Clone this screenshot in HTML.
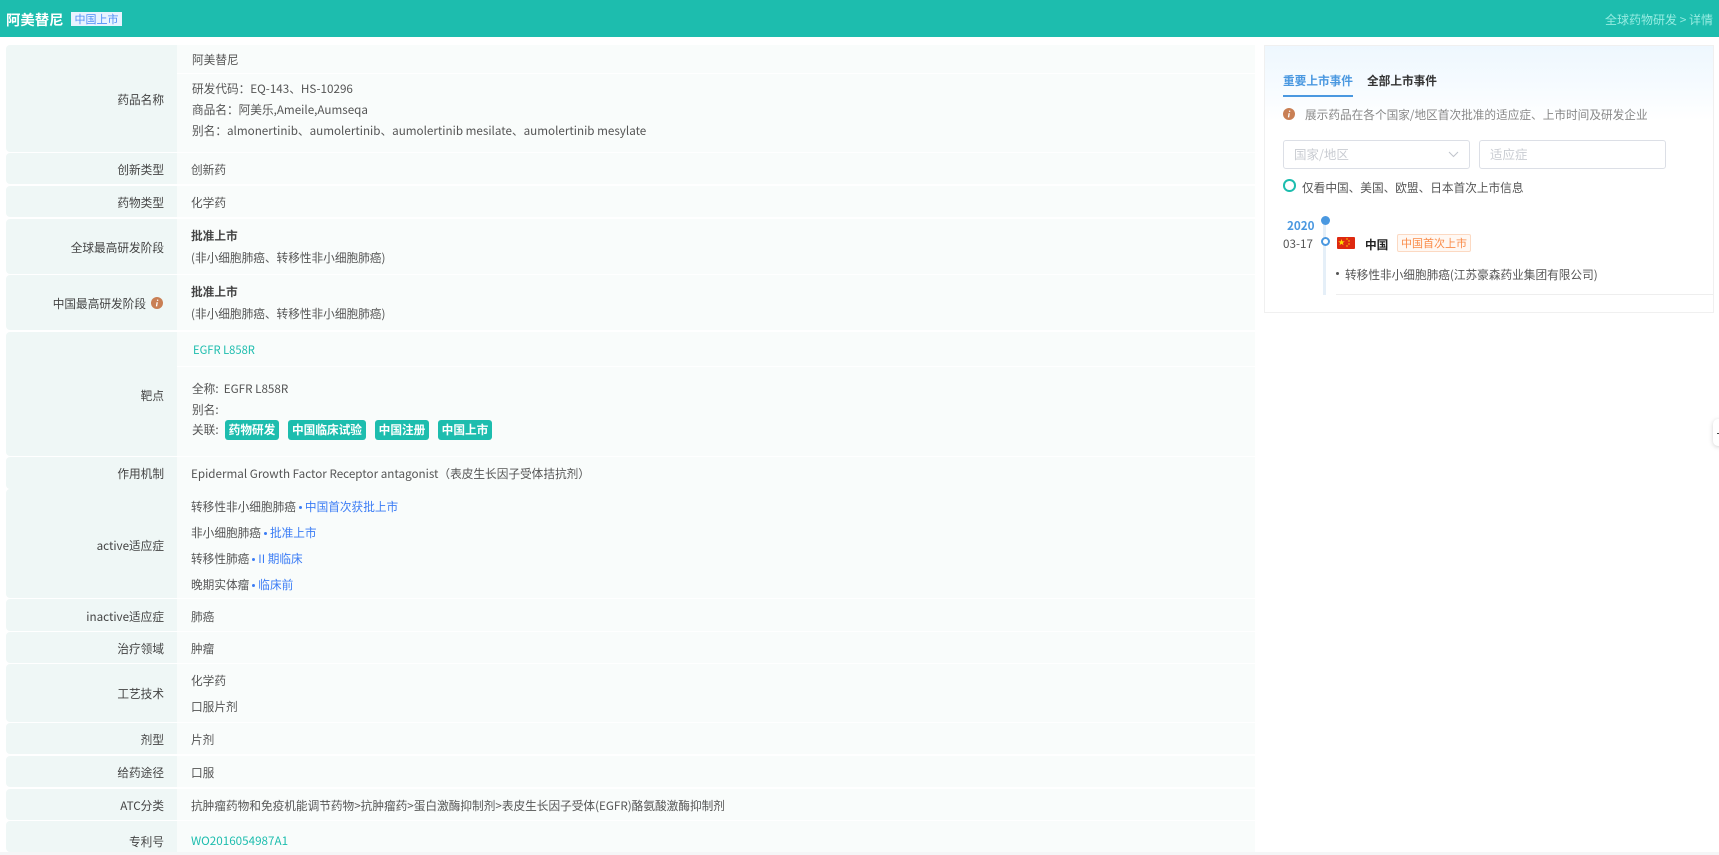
<!DOCTYPE html>
<html lang="zh">
<head>
<meta charset="utf-8">
<title>阿美替尼</title>
<style>
html,body{margin:0;padding:0;background:#fff;width:1719px;height:855px;overflow:hidden}
body{position:relative;font-family:"Noto Sans CJK SC","Liberation Sans",sans-serif;font-size:11.67px;color:#555}
div,span.a{position:absolute}
.t{white-space:nowrap;line-height:20px;height:20px}
.l{position:absolute;left:6px;width:171px;background:#eff7f6;border-radius:4px 0 0 4px}
.r{position:absolute;left:177px;width:1078px;background:#f9fcfb}
.lb{position:absolute;right:1555px;white-space:nowrap;line-height:20px;height:20px;color:#444}
.tag{position:absolute;top:420px;height:20px;line-height:20px;background:#1dbdae;color:#fff;font-weight:700;text-align:center;border-radius:3px;white-space:nowrap}
.b{color:#3b7cf5}
.g{color:#1dbdae}
i.d{display:inline-block;width:3px;height:3px;border-radius:50%;background:#3b7cf5;margin:0 3px 0 3px;vertical-align:2px}
</style>
</head>
<body>
<div style="left:0;top:0;width:1719px;height:37px;background:#1dbdae"></div>
<div class="t" style="left:6px;top:10px;font-size:14.4px;font-weight:700;color:#fff">阿美替尼</div>
<div class="t" style="left:71px;top:12px;width:51px;height:14px;line-height:14px;background:#e8f3ff;color:#4f8ff7;font-size:11px;text-align:center">中国上市</div>
<div class="t" style="left:1605px;top:10px;color:#97ece2;font-size:12px">全球药物研发 &gt; 详情</div>

<div class="l" style="top:45px;height:107px"></div><div class="r" style="top:45px;height:28px"></div><div class="r" style="top:74px;height:78px"></div>
<div class="l" style="top:153px;height:31px"></div><div class="r" style="top:153px;height:31px"></div>
<div class="l" style="top:186px;height:31px"></div><div class="r" style="top:186px;height:31px"></div>
<div class="l" style="top:219px;height:55px"></div><div class="r" style="top:219px;height:55px"></div>
<div class="l" style="top:275px;height:55px"></div><div class="r" style="top:275px;height:55px"></div>
<div class="l" style="top:332px;height:124px"></div><div class="r" style="top:332px;height:34px"></div><div class="r" style="top:367px;height:89px"></div>
<div class="l" style="top:457px;height:32px"></div><div class="r" style="top:457px;height:32px"></div>
<div class="l" style="top:489px;height:109px"></div><div class="r" style="top:489px;height:109px"></div>
<div class="l" style="top:599px;height:32px"></div><div class="r" style="top:599px;height:32px"></div>
<div class="l" style="top:632px;height:31px"></div><div class="r" style="top:632px;height:31px"></div>
<div class="l" style="top:664px;height:58px"></div><div class="r" style="top:664px;height:58px"></div>
<div class="l" style="top:723px;height:31px"></div><div class="r" style="top:723px;height:31px"></div>
<div class="l" style="top:756px;height:31px"></div><div class="r" style="top:756px;height:31px"></div>
<div class="l" style="top:789px;height:31px"></div><div class="r" style="top:789px;height:31px"></div>
<div class="l" style="top:821px;height:31px"></div><div class="r" style="top:821px;height:31px"></div>
<div style="left:0;top:852px;width:1719px;height:3px;background:#f5f6f7"></div>

<div class="lb" style="top:90px">药品名称</div>
<div class="lb" style="top:160px">创新类型</div>
<div class="lb" style="top:193px">药物类型</div>
<div class="lb" style="top:238px">全球最高研发阶段</div>
<div class="lb" style="top:294px;right:1573px">中国最高研发阶段</div>
<svg style="position:absolute;left:151px;top:297px" width="12" height="12" viewBox="0 0 12 12"><circle cx="6" cy="6" r="6" fill="#c97f54"/><path d="M6.6 2.6v1.3M6.2 5.2L5.5 9.4" stroke="#fff" stroke-width="1.3" fill="none"/></svg>
<div class="lb" style="top:386px">靶点</div>
<div class="lb" style="top:464px">作用机制</div>
<div class="lb" style="top:536px">active适应症</div>
<div class="lb" style="top:607px">inactive适应症</div>
<div class="lb" style="top:639px">治疗领域</div>
<div class="lb" style="top:684px">工艺技术</div>
<div class="lb" style="top:730px">剂型</div>
<div class="lb" style="top:763px">给药途径</div>
<div class="lb" style="top:796px">ATC分类</div>
<div class="lb" style="top:832px">专利号</div>

<div class="t" style="left:192px;top:50px">阿美替尼</div>
<div class="t" style="left:192px;top:79px">研发代码：EQ-143、HS-10296</div>
<div class="t" style="left:192px;top:100px">商品名：阿美乐,Ameile,Aumseqa</div>
<div class="t" style="left:192px;top:121px">别名：almonertinib、aumolertinib、aumolertinib mesilate、aumolertinib mesylate</div>
<div class="t" style="left:191px;top:160px">创新药</div>
<div class="t" style="left:191px;top:193px">化学药</div>
<div class="t" style="left:191px;top:226px;font-weight:700;color:#444">批准上市</div>
<div class="t" style="left:191px;top:248px">(非小细胞肺癌、转移性非小细胞肺癌)</div>
<div class="t" style="left:191px;top:282px;font-weight:700;color:#444">批准上市</div>
<div class="t" style="left:191px;top:304px">(非小细胞肺癌、转移性非小细胞肺癌)</div>

<div class="t g" style="left:193px;top:340px;font-size:11.2px">EGFR L858R</div>
<div class="t" style="left:192px;top:379px">全称:&nbsp; EGFR L858R</div>
<div class="t" style="left:192px;top:400px">别名:</div>
<div class="t" style="left:192px;top:420px">关联:</div>
<div class="tag" style="left:225px;width:54px">药物研发</div>
<div class="tag" style="left:288px;width:78px">中国临床试验</div>
<div class="tag" style="left:375px;width:54px">中国注册</div>
<div class="tag" style="left:438px;width:54px">中国上市</div>

<div class="t" style="left:191px;top:464px">Epidermal Growth Factor Receptor antagonist（表皮生长因子受体拮抗剂）</div>
<div class="t" style="left:191px;top:497px">转移性非小细胞肺癌<i class="d"></i><span class="b">中国首次获批上市</span></div>
<div class="t" style="left:191px;top:523px">非小细胞肺癌<i class="d"></i><span class="b">批准上市</span></div>
<div class="t" style="left:191px;top:549px">转移性肺癌<i class="d"></i><span class="b">II 期临床</span></div>
<div class="t" style="left:191px;top:575px">晚期实体瘤<i class="d"></i><span class="b">临床前</span></div>
<div class="t" style="left:191px;top:607px">肺癌</div>
<div class="t" style="left:191px;top:639px">肿瘤</div>
<div class="t" style="left:191px;top:671px">化学药</div>
<div class="t" style="left:191px;top:697px">口服片剂</div>
<div class="t" style="left:191px;top:730px">片剂</div>
<div class="t" style="left:191px;top:763px">口服</div>
<div class="t" style="left:191px;top:796px">抗肿瘤药物和免疫机能调节药物&gt;抗肿瘤药&gt;蛋白激酶抑制剂&gt;表皮生长因子受体(EGFR)酪氨酸激酶抑制剂</div>
<div class="t g" style="left:191px;top:831px">WO2016054987A1</div>

<div style="left:1264px;top:45px;width:448px;height:266px;border:1px solid #f0f0f0;background:linear-gradient(#eef7fe 0,#f6fbff 40px,#fff 75px)"></div>
<div class="t" style="left:1283px;top:71px;color:#4a98e0;font-weight:700">重要上市事件</div>
<div style="left:1283px;top:95px;width:70px;height:2px;background:#4a98e0"></div>
<div class="t" style="left:1367px;top:71px;color:#333;font-weight:700">全部上市事件</div>
<svg style="position:absolute;left:1283px;top:108px" width="12" height="12" viewBox="0 0 12 12"><circle cx="6" cy="6" r="6" fill="#c97f54"/><path d="M6.6 2.6v1.3M6.2 5.2L5.5 9.4" stroke="#fff" stroke-width="1.3" fill="none"/></svg>
<div class="t" style="left:1305px;top:105px;color:#888">展示药品在各个国家/地区首次批准的适应症、上市时间及研发企业</div>
<div style="left:1283px;top:140px;width:185px;height:27px;border:1px solid #dcdfe6;border-radius:3px;background:#fff"></div>
<div class="t" style="left:1294px;top:144px;color:#c9ccd2;font-size:12.5px">国家/地区</div>
<svg style="position:absolute;left:1448px;top:151px" width="11" height="7" viewBox="0 0 11 7"><path d="M1 1l4.5 4.5L10 1" fill="none" stroke="#c0c4cc" stroke-width="1"/></svg>
<div style="left:1479px;top:140px;width:185px;height:27px;border:1px solid #dcdfe6;border-radius:3px;background:#fff"></div>
<div class="t" style="left:1490px;top:144px;color:#c9ccd2;font-size:12.5px">适应症</div>
<div style="left:1283px;top:179px;width:8.6px;height:8.6px;border:2.7px solid #1dbdae;border-radius:50%;background:#fff"></div>
<div class="t" style="left:1302px;top:178px">仅看中国、美国、欧盟、日本首次上市信息</div>

<div style="left:1323px;top:220px;width:3px;height:75px;background:#e5eff8"></div>
<div style="left:1321px;top:216px;width:9px;height:9px;border-radius:50%;background:#4a98e0"></div>
<div style="left:1321px;top:237px;width:5px;height:5px;border:2.5px solid #4a98e0;border-radius:50%;background:#fff"></div>
<div class="t" style="left:1287px;top:216px;color:#4a98e0;font-weight:700">2020</div>
<div class="t" style="left:1283px;top:234px">03-17</div>
<svg style="position:absolute;left:1337px;top:237px" width="18" height="12" viewBox="0 0 18 12"><rect width="18" height="12" rx="1" fill="#de2910"/><polygon points="4.5,2 5.3,4.4 7.8,4.4 5.8,5.9 6.5,8.3 4.5,6.8 2.5,8.3 3.2,5.9 1.2,4.4 3.7,4.4" fill="#ffde00"/><circle cx="10" cy="2" r=".7" fill="#ffde00"/><circle cx="12" cy="4" r=".7" fill="#ffde00"/><circle cx="12" cy="7" r=".7" fill="#ffde00"/><circle cx="10" cy="9" r=".7" fill="#ffde00"/></svg>
<div class="t" style="left:1365px;top:235px;color:#222;font-weight:700">中国</div>
<div class="t" style="left:1397px;top:234px;width:72px;height:16px;line-height:16px;border:1px solid #fcd9c2;background:#fff8f3;color:#fa8c4a;text-align:center;border-radius:2px;font-size:11px">中国首次上市</div>
<div style="left:1336px;top:272px;width:3px;height:3px;border-radius:50%;background:#555"></div>
<div class="t" style="left:1345px;top:265px">转移性非小细胞肺癌(江苏豪森药业集团有限公司)</div>
<div style="left:1336px;top:294px;width:377px;height:1px;background:#eee"></div>

<div style="left:1713px;top:419px;width:12px;height:27px;background:#fff;border-radius:5px;box-shadow:0 1px 5px rgba(0,0,0,.18)"></div>
<div style="left:1717px;top:433px;width:2px;height:1px;background:#444"></div>
</body>
</html>
